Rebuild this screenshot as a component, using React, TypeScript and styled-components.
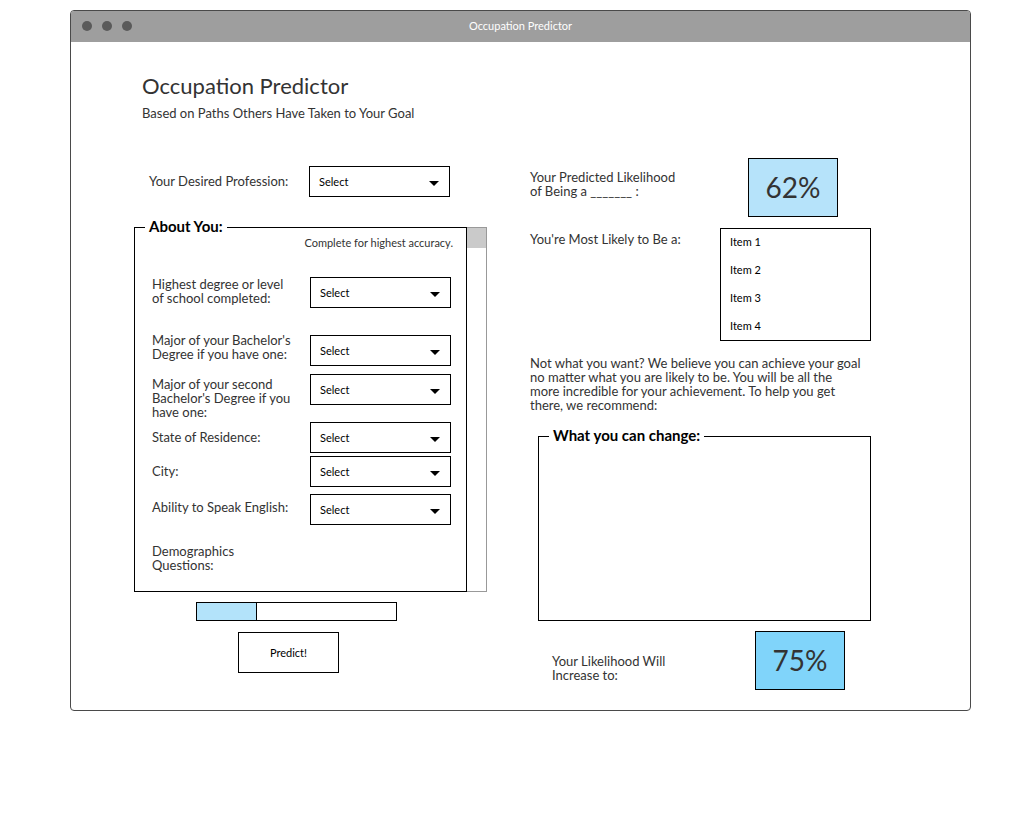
import React from "react";
import styled, { createGlobalStyle } from "styled-components";

const Global = createGlobalStyle`
  html, body { margin: 0; padding: 0; background: #fff; }
  body { font-family: "Source Sans Pro", Lato, "Liberation Sans", sans-serif; color: #333; }
  * { box-sizing: border-box; }
`;

const Page = styled.div`
  padding: 10px 0 0 70px;
`;

const Window = styled.div`
  width: 901px;
  height: 701px;
  border: 1px solid #4a4a4a;
  border-radius: 4px;
  overflow: hidden;
  background: #fff;
`;

const TitleBar = styled.div`
  height: 31px;
  background: #9e9e9e;
  display: flex;
  align-items: center;
  padding: 0 0 2px 11px;
  gap: 10px;
`;

const Dot = styled.span`
  width: 10px;
  height: 10px;
  border-radius: 50%;
  background: #5a5a5a;
`;

const WindowTitle = styled.div`
  flex: 1;
  text-align: center;
  color: #fff;
  font-size: 11px;
  margin-right: 71px;
`;

const Content = styled.div`
  padding: 30px 0 0 63px;
`;

const Title = styled.h1`
  margin: 0 0 0 8px;
  font-size: 22px;
  line-height: 28px;
  font-weight: 400;
  color: #333;
`;

const Subtitle = styled.div`
  margin: 5px 0 0 8px;
  font-size: 13px;
  line-height: 16px;
`;

const Columns = styled.div`
  display: flex;
  gap: 43px;
  margin-top: 37px;
`;

const LeftCol = styled.div`
  width: 353px;
  display: flex;
  flex-direction: column;
  padding-top: 8px;
`;

const RightCol = styled.div`
  width: 342px;
  display: flex;
  flex-direction: column;
`;

const InlineRow = styled.div<{ $mt?: number; $pl?: number }>`
  display: flex;
  align-items: flex-start;
  margin-top: ${(p) => p.$mt ?? 0}px;
  padding-left: ${(p) => p.$pl ?? 0}px;
`;

const Label = styled.div<{ $w: number; $mt?: number }>`
  width: ${(p) => p.$w}px;
  flex-shrink: 0;
  margin-top: ${(p) => p.$mt ?? 0}px;
  font-size: 13px;
  line-height: 14px;
  color: #333;
`;

const SelectBox = styled.div<{ $mt?: number }>`
  width: 141px;
  height: 31px;
  margin-top: ${(p) => p.$mt ?? 0}px;
  border: 1px solid #000;
  background: #fff;
  display: flex;
  align-items: center;
  justify-content: space-between;
  padding: 0 10px 0 9px;
  font-size: 11px;
  color: #000;
  flex-shrink: 0;
`;

const Arrow = styled.span`
  width: 0;
  height: 0;
  border-left: 5px solid transparent;
  border-right: 5px solid transparent;
  border-top: 5px solid #000;
  margin-top: 3px;
`;

const Select = ({ mt }: { mt?: number }) => (
  <SelectBox $mt={mt}>
    <span>Select</span>
    <Arrow />
  </SelectBox>
);

const Panel = styled.div`
  display: flex;
  margin-top: 30px;
  height: 365px;
`;

const Group = styled.div<{ $w: number; $h: number; $ml?: number }>`
  position: relative;
  width: ${(p) => p.$w}px;
  height: ${(p) => p.$h}px;
  margin-left: ${(p) => p.$ml ?? 0}px;
  border: 1px solid #000;
  flex-shrink: 0;
`;

const Legend = styled.div`
  position: absolute;
  top: -11px;
  left: 10px;
  padding: 0 4px;
  background: #fff;
  font-size: 15px;
  line-height: 18px;
  font-weight: 700;
  color: #000;
`;

const GroupBody = styled.div`
  padding: 8px 13px 0 17px;
  display: flex;
  flex-direction: column;
`;

const Hint = styled.div`
  font-size: 11px;
  line-height: 14px;
  text-align: right;
`;

const Scrollbar = styled.div`
  width: 20px;
  height: 365px;
  border: 1px solid #999;
  border-left: none;
  background: #fff;
  display: flex;
  flex-direction: column;
`;

const Thumb = styled.div`
  height: 20px;
  background: #cacaca;
`;

const Progress = styled.div`
  margin: 10px 0 0 62px;
  width: 201px;
  height: 19px;
  border: 1px solid #000;
  display: flex;
`;

const ProgressFill = styled.div`
  height: 100%;
  background: #b3e3fa;
  border-right: 1px solid #000;
`;

const Button = styled.div`
  margin: 11px 0 0 104px;
  width: 101px;
  height: 41px;
  border: 1px solid #000;
  display: flex;
  align-items: center;
  justify-content: center;
  font-size: 11px;
  color: #000;
`;

const Percent = styled.div<{ $bg: string }>`
  width: 90px;
  height: 59px;
  border: 1px solid #000;
  background: ${(p) => p.$bg};
  display: flex;
  align-items: center;
  justify-content: center;
  padding-bottom: 2px;
  font-size: 28px;
  color: #333;
  flex-shrink: 0;
`;

const List = styled.div`
  width: 151px;
  height: 113px;
  border: 1px solid #000;
  padding: 0 0 0 9px;
  flex-shrink: 0;
`;

const ListItem = styled.div`
  font-size: 11px;
  line-height: 28px;
  color: #000;
  &:first-child { margin-top: -1px; }
`;

const Paragraph = styled.p`
  margin: 15px 0 0 0;
  font-size: 13px;
  line-height: 14px;
`;

export default function App() {
  const rows = [
    { label: ["Highest degree or level", "of school completed:"], rowMt: 27, lMt: 0, sMt: 0 },
    { label: ["Major of your Bachelor's", "Degree if you have one:"], rowMt: 25, lMt: 0, sMt: 2 },
    { label: ["Major of your second", "Bachelor's Degree if you", "have one:"], rowMt: 8, lMt: 3, sMt: 0 },
    { label: ["State of Residence:"], rowMt: 3, lMt: 8, sMt: 0 },
    { label: ["City:"], rowMt: 3, lMt: 8, sMt: 0 },
    { label: ["Ability to Speak English:"], rowMt: 7, lMt: 6, sMt: 0 },
  ];
  return (
    <>
      <Global />
      <Page>
        <Window>
          <TitleBar>
            <Dot />
            <Dot />
            <Dot />
            <WindowTitle>Occupation Predictor</WindowTitle>
          </TitleBar>
          <Content>
            <Title>Occupation Predictor</Title>
            <Subtitle>Based on Paths Others Have Taken to Your Goal</Subtitle>
            <Columns>
              <LeftCol>
                <InlineRow $pl={15}>
                  <Label $w={160} $mt={8}>Your Desired Profession:</Label>
                  <Select />
                </InlineRow>
                <Panel>
                  <Group $w={333} $h={365}>
                    <Legend>About You:</Legend>
                    <GroupBody>
                      <Hint>Complete for highest accuracy.</Hint>
                      {rows.map((r, i) => (
                        <InlineRow key={i} $mt={r.rowMt}>
                          <Label $w={158} $mt={r.lMt}>
                            {r.label.map((l, j) => (
                              <div key={j}>{l}</div>
                            ))}
                          </Label>
                          <Select mt={r.sMt} />
                        </InlineRow>
                      ))}
                      <InlineRow $mt={19}>
                        <Label $w={158}>
                          <div>Demographics</div>
                          <div>Questions:</div>
                        </Label>
                      </InlineRow>
                    </GroupBody>
                  </Group>
                  <Scrollbar>
                    <Thumb />
                  </Scrollbar>
                </Panel>
                <Progress>
                  <ProgressFill style={{ width: "30%" }} />
                </Progress>
                <Button>Predict!</Button>
              </LeftCol>
              <RightCol>
                <InlineRow>
                  <Label $w={218} $mt={12}>
                    <div>Your Predicted Likelihood</div>
                    <div>of Being a _______ :</div>
                  </Label>
                  <Percent $bg="#b6e3fa">62%</Percent>
                </InlineRow>
                <InlineRow $mt={11}>
                  <Label $w={190} $mt={4}>You're Most Likely to Be a:</Label>
                  <List>
                    <ListItem>Item 1</ListItem>
                    <ListItem>Item 2</ListItem>
                    <ListItem>Item 3</ListItem>
                    <ListItem>Item 4</ListItem>
                  </List>
                </InlineRow>
                <Paragraph>
                  Not what you want? We believe you can achieve your goal
                  <br />
                  no matter what you are likely to be. You will be all the
                  <br />
                  more incredible for your achievement. To help you get
                  <br />
                  there, we recommend:
                </Paragraph>
                <InlineRow $mt={24}>
                  <Group $w={333} $h={185} $ml={8}>
                    <Legend>What you can change:</Legend>
                  </Group>
                </InlineRow>
                <InlineRow $mt={10} $pl={22}>
                  <Label $w={203} $mt={23}>
                    <div>Your Likelihood Will</div>
                    <div>Increase to:</div>
                  </Label>
                  <Percent $bg="#80d4fa">75%</Percent>
                </InlineRow>
              </RightCol>
            </Columns>
          </Content>
        </Window>
      </Page>
    </>
  );
}
